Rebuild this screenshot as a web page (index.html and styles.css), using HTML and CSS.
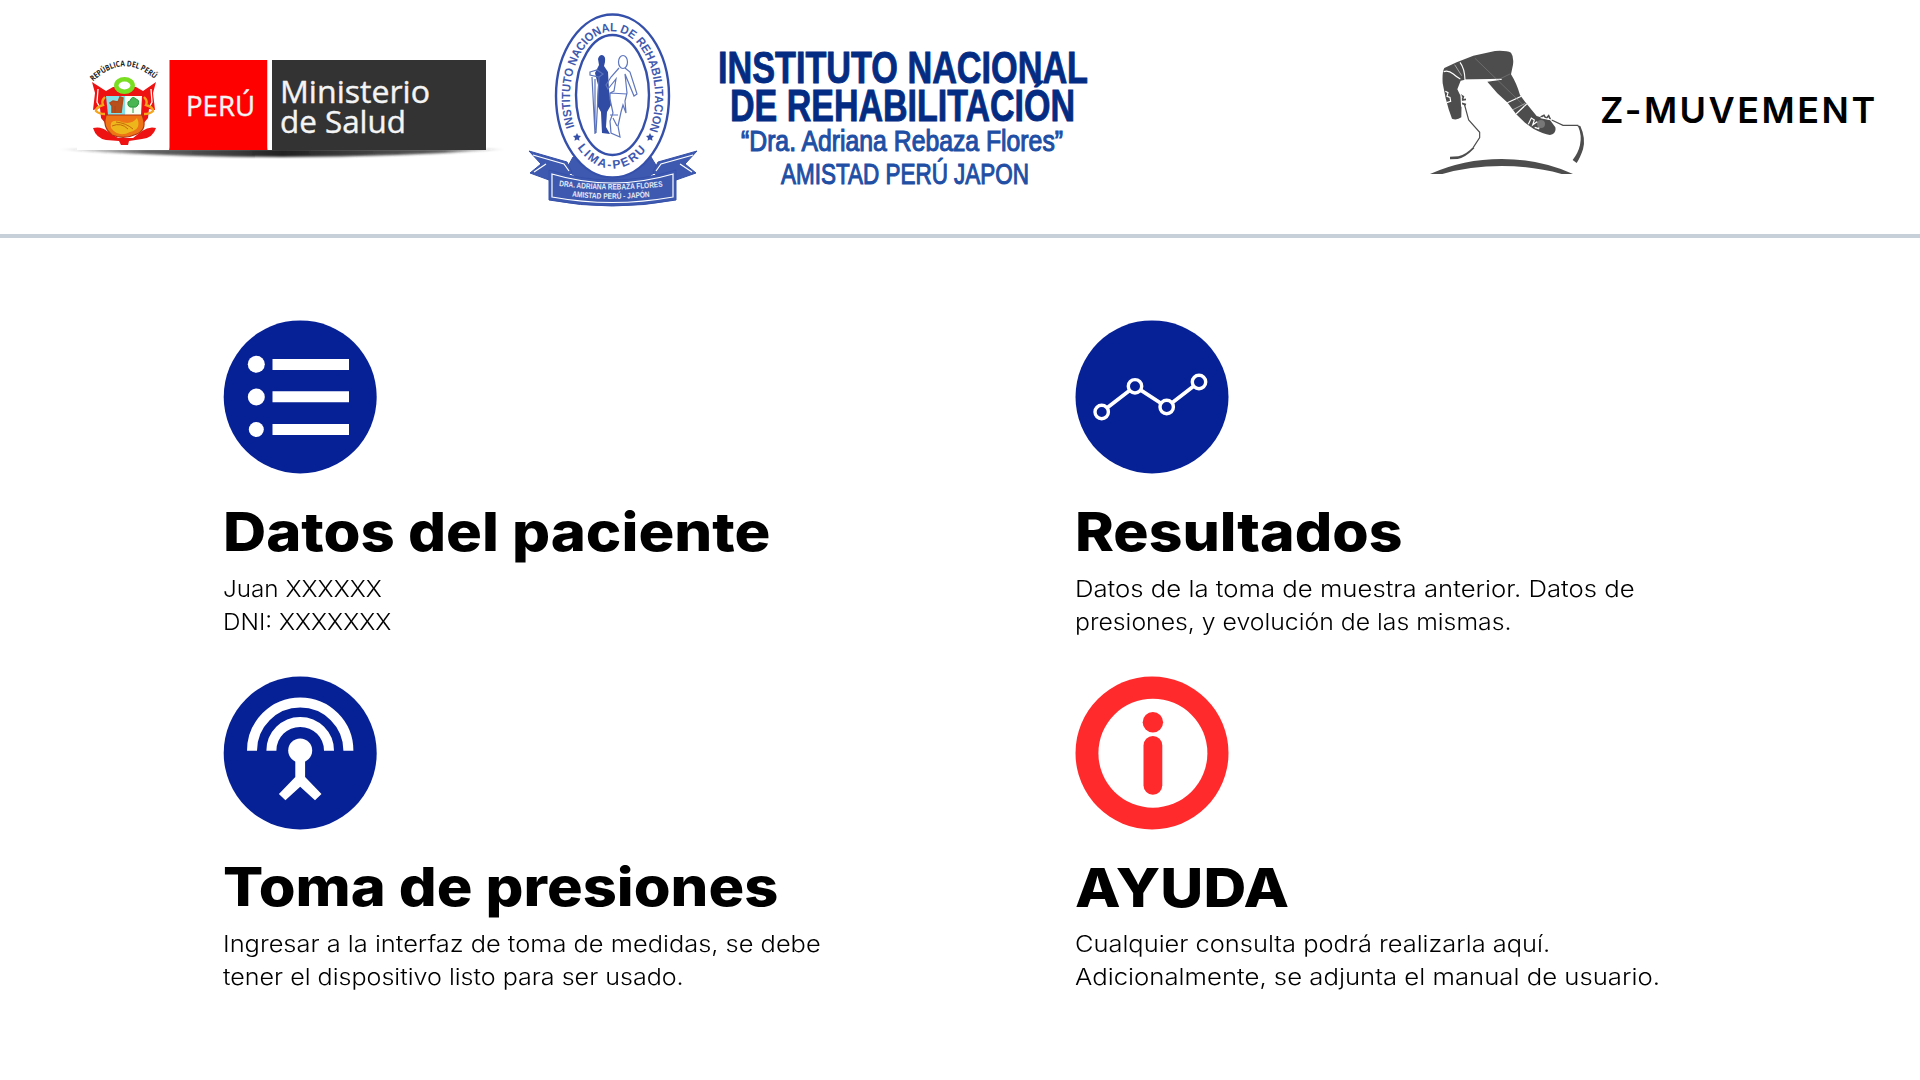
FILE: index.html
```html
<!DOCTYPE html>
<html lang="es">
<head>
<meta charset="utf-8">
<title>Z-MUVEMENT</title>
<link rel="stylesheet" href="styles.css">
</head>
<body>
<header class="header">
  <svg class="logo-minsa" viewBox="50 0 460 233" role="img" aria-label="Ministerio de Salud">
    <defs>
      <linearGradient id="shade" x1="0" x2="1" y1="0" y2="0">
        <stop offset="0" stop-color="#333" stop-opacity="0"/>
        <stop offset=".2" stop-color="#333" stop-opacity=".75"/>
        <stop offset=".5" stop-color="#222"/>
        <stop offset=".85" stop-color="#333" stop-opacity=".8"/>
        <stop offset="1" stop-color="#333" stop-opacity="0"/>
      </linearGradient>
      <filter id="soft" x="-5%" y="-50%" width="110%" height="200%"><feGaussianBlur stdDeviation="1.3"/></filter>
      <path id="crest-arc" d="M93 81.500Q125 51 157 81.500"/>
    </defs>
    <path d="M56 149H508Q400 157 282 157Q160 157 56 149Z" fill="url(#shade)" filter="url(#soft)"/>
    <path d="M77 60H169V150H77Z" fill="#fff"/>
    <path d="M169.500 60H267.500V150H169.500Z" fill="#f00"/>
    <path d="M267.500 60H272V150H267.500Z" fill="#fff"/>
    <path d="M272 60H486V150H272Z" fill="#333"/>
    <text class="crest-text"><textPath href="#crest-arc" textLength="69" lengthAdjust="spacingAndGlyphs">REPÚBLICA DEL PERÚ</textPath></text>
    <g>
      <path d="M92 82L106 91 113 87H136L143 91 156 82 153 93 155 110 149 109 148 118 143 124H106L101 118 100 108 93 110 95 93Z" fill="#ee1212"/>
      <path d="M98 89L97 102 99 106M151 89L152 102 150 106" fill="none" stroke="#fff" stroke-width="1.300"/>
      <path d="M105 97Q101 101 103 105Q96 107 96 111Q99 114 105 114M144 97Q148 101 146 105Q153 107 153 111Q150 114 144 114" fill="none" stroke="#f5a51c" stroke-width="2.400"/>
      <path d="M93 128Q101 126 107 131L118 138H133L142 131Q149 126 156 128Q153 138 142 139L129 141 128 145H121L119 141 106 140Q96 138 93 128Z" fill="#ee1212"/>
      <path d="M106 96H125V115H108Z" fill="#7fe2ea"/>
      <path d="M125 96H142L141 115H125Z" fill="#f7fff2"/>
      <path d="M112 113V106L110 103 113 101 118 102 120 97 123 98 122 105 121 113M115 113V106" fill="#b8501c" stroke="#b04a1c" stroke-width="1.500"/>
      <path d="M133 113V107M128 105Q127 101 130 101Q132 95 136 99Q140 100 138 105Q136 108 133 107Q129 108 128 105Z" fill="#49b553" stroke="#2b9a40" stroke-width="1"/>
      <path d="M106 115H142Q148 129 137 134Q124 140 112 135Q102 127 106 115Z" fill="#ee7416" stroke="#b43412" stroke-width="1.200"/>
      <path d="M111 128Q109 119 119 121Q131 126 137 118Q142 129 130 132Q119 138 111 128Z" fill="#edb61b"/>
      <path d="M112 126Q121 122 128 129M116 122Q126 123 133 129" fill="none" stroke="#c7680f"/>
      <ellipse cx="124.500" cy="85.500" rx="8.200" ry="6.200" fill="#fff" stroke="#79dd20" stroke-width="4.500"/>
    </g>
    <g class="gov-text">
      <text x="186" y="115.500" font-size="27.500" textLength="69" lengthAdjust="spacingAndGlyphs">PERÚ</text>
      <text x="280" y="102.500" font-size="31" textLength="150" lengthAdjust="spacingAndGlyphs">Ministerio</text>
      <text x="280" y="132.500" font-size="31" textLength="126" lengthAdjust="spacingAndGlyphs">de Salud</text>
    </g>
  </svg>

  <svg class="logo-inr" viewBox="520 0 590 233" role="img" aria-label="Instituto Nacional de Rehabilitación">
    <defs>
      <path id="ring-top" d="M574.500 127A42.500 66 0 1 1 650.500 127"/>
      <path id="ring-bottom" d="M573 141A51 75 0 0 0 652 141"/>
      <path id="band-1" d="M559 186Q612 193 667 186"/>
      <path id="band-2" d="M572 196.500Q612 201 654 196.500"/>
    </defs>
    <g fill="#3e5ab0" stroke="#3550aa" stroke-width="1">
      <path d="M566 170L573 157H651L659 170 640 182H584Z"/>
      <path d="M529 151L567 162 572 172 561 182 549 180 530 173 541 164Z"/>
      <path d="M697 151L658 162 653 172 664 182 676 180 696 173 685 164Z"/>
      <path d="M549 170Q612 190 676 170V200Q612 212 549 200Z"/>
    </g>
    <path d="M533 155L564 164 569 171M534 172L546 164M693 155L661 164 656 171M692 172L680 164M552 174Q612 192 673 174V197Q612 208 552 197Z" fill="none" stroke="#fff" stroke-width="1.200"/>
    <ellipse cx="612.500" cy="96" rx="56.500" ry="81.500" fill="#fff" stroke="#3550aa" stroke-width="2.400"/>
    <ellipse cx="612.500" cy="95" rx="36.500" ry="60" fill="#fff" stroke="#3550aa" stroke-width="2.400"/>
    <text class="seal-text" font-size="12"><textPath href="#ring-top" textLength="236" lengthAdjust="spacingAndGlyphs">INSTITUTO NACIONAL DE REHABILITACION</textPath></text>
    <text class="seal-text" font-size="12"><textPath href="#ring-bottom" textLength="82" lengthAdjust="spacing" startOffset="8">LIMA-PERU</textPath></text>
    <path d="M577 133l1.200 2.600 2.800.4-2 2 .5 2.800-2.500-1.300-2.500 1.300.5-2.800-2-2 2.800-.4ZM650 133l1.200 2.600 2.800.4-2 2 .5 2.800-2.500-1.300-2.500 1.300.5-2.800-2-2 2.800-.4Z" fill="#3550aa"/>
    <path d="M602 55Q606 56 605 62L604 66 608 72 609 90 611 105 607 112 606 127 610 134 602 133 601 112 597 105 598 85 595 73 599 65 598 59Q599 55 602 55Z" fill="#2f4ba3"/>
    <path d="M590 72L597 70 603 74 599 77 590 75ZM592 77L595 134M599 77L596 133M595 79V130" fill="none" stroke="#5a72ba" stroke-width="1.200"/>
    <g fill="none" stroke="#5f76bd" stroke-width="1.200">
      <ellipse cx="623" cy="62" rx="4.500" ry="6.500"/>
      <path d="M619 68L611 77 606 85 608 89 616 79 614 91 610 93V99L613 113 610 121 611 133 620 137 618 126 621 112 623 105 626 113 625 101 627 93 625 74 634 96 637 94 630 72 625 68M610 93L627 94M610 115L618 115M613 118L617 126"/>
    </g>
    <text class="band-text"><textPath href="#band-1" textLength="104" lengthAdjust="spacingAndGlyphs">DRA. ADRIANA REBAZA FLORES</textPath></text>
    <text class="band-text"><textPath href="#band-2" textLength="78" lengthAdjust="spacingAndGlyphs">AMISTAD PERÚ - JAPÓN</textPath></text>
    <g class="inr-title">
      <text x="718" y="82.500" textLength="370" lengthAdjust="spacingAndGlyphs">INSTITUTO NACIONAL</text>
      <text x="730" y="120.500" textLength="345" lengthAdjust="spacingAndGlyphs">DE REHABILITACIÓN</text>
    </g>
    <g class="inr-sub">
      <text x="741" y="150.500" textLength="322" lengthAdjust="spacingAndGlyphs">“Dra. Adriana Rebaza Flores”</text>
      <text x="781" y="184.300" textLength="248" lengthAdjust="spacingAndGlyphs">AMISTAD PERÚ JAPON</text>
    </g>
  </svg>

  <div class="brand">
    <svg class="brand-mark" viewBox="0 0 600 480" aria-hidden="true">
      <g fill="#4d4d4d">
        <path d="M60 432Q160 387 275 387Q390 387 489 432H455Q370 408 275 408Q180 408 97 432Z"/>
        <path d="M103 114L140 97 190 77 255 63Q290 61 303 68Q312 80 309 104L303 133Q320 160 330 195L345 215 380 258 392 262 420 270 436 292Q440 310 420 315Q400 312 370 296L345 278 318 252 293 218 262 190 232 155 275 149 165 149 152 152 142 178 155 205 154 262Q140 272 126 266L116 238 107 205 98 160Q96 125 103 114Z"/>
        <path d="M120 380L145 379Q170 372 190 350L193 355Q165 384 143 387L120 388Z"/>
        <path d="M500 286L511 288Q528 325 519 358Q510 385 500 399L488 390Q505 368 510 345Q516 315 505 291Z"/>
      </g>
      <path d="M163 222L176 270 209 307V323L190 352M425 270L459 286H505" fill="none" stroke="#4d4d4d" stroke-width="3.500"/>
      <path d="M152 195L160 200 157 210 168 208M155 220L168 224M392 261L402 256 408 266 416 257 422 270" fill="none" stroke="#4d4d4d" stroke-width="5"/>
      <g fill="none" stroke="#fff" stroke-width="3.500">
        <path d="M101 125Q115 120 130 132Q140 141 151 147M150 97Q164 115 165 150L275 148M292 218L334 199M318 252L350 222M106 184L114 188 111 199 120 202 122 214 110 218M355 283L364 264 373 270 368 285 380 276 390 282 386 296 374 292M153 194L155 230M392 263L425 270"/>
        <path d="M134 104L155 137M307 240L346 220" stroke-width="1.500"/>
      </g>
      <path d="M195 85L345 230M265 149L300 132" fill="none" stroke="#8a8a8a" stroke-width="1.500"/>
      <circle cx="393" cy="282" r="12" fill="#777"/>
    </svg>
    <span class="brand-name">Z-MUVEMENT</span>
  </div>
</header>

<main class="menu">
  <section class="card">
    <svg class="icon" viewBox="223 320 154 154" aria-hidden="true">
      <circle cx="300.200" cy="396.900" r="76.500" fill="#062096"/>
      <g fill="#fff">
        <circle cx="256.300" cy="364.300" r="8.500"/><circle cx="256.300" cy="396.900" r="8.500"/><circle cx="256.300" cy="429.500" r="7.500"/>
        <path d="M272.500 359H349V369.900H272.500ZM272.500 391.300H349V402.300H272.500ZM272.500 424H349V434.900H272.500Z"/>
      </g>
    </svg>
    <h2 class="title title-patient">Datos del paciente</h2>
    <p class="text"><span class="line narrow">Juan XXXXXX</span><span class="line narrow">DNI: XXXXXXX</span></p>
  </section>

  <section class="card">
    <svg class="icon" viewBox="1075 320 154 154" aria-hidden="true">
      <circle cx="1152" cy="396.900" r="76.500" fill="#062096"/>
      <path d="M1101.700 412L1135 386.300 1166.700 407 1199 382" fill="none" stroke="#fff" stroke-width="3.800"/>
      <g fill="#062096" stroke="#fff" stroke-width="3.400">
        <circle cx="1101.700" cy="412" r="6.700"/><circle cx="1135" cy="386.300" r="6.700"/><circle cx="1166.700" cy="407" r="6.700"/><circle cx="1199" cy="382" r="6.700"/>
      </g>
    </svg>
    <h2 class="title title-results">Resultados</h2>
    <p class="text"><span class="line wide">Datos de la toma de muestra anterior. Datos de</span><span class="line snug">presiones, y evolución de las mismas.</span></p>
  </section>

  <section class="card">
    <svg class="icon" viewBox="223 676 154 154" aria-hidden="true">
      <circle cx="300.200" cy="753" r="76.500" fill="#062096"/>
      <path d="M252 750.700A48.200 48.200 0 0 1 348.400 750.700M271.400 750.700A28.800 28.800 0 0 1 329 750.700" fill="none" stroke="#fff" stroke-width="10"/>
      <circle cx="300.200" cy="750.500" r="12" fill="#fff"/>
      <path d="M295.300 758V777L278.900 794 285.400 800.300 300.200 786.700 315 800.300 321.500 794 305.100 777V758Z" fill="#fff"/>
    </svg>
    <h2 class="title title-pressure">Toma de presiones</h2>
    <p class="text"><span class="line medium">Ingresar a la interfaz de toma de medidas, se debe</span><span class="line regular">tener el dispositivo listo para ser usado.</span></p>
  </section>

  <section class="card">
    <svg class="icon" viewBox="1075 676 154 154" aria-hidden="true">
      <circle cx="1152" cy="753" r="76.500" fill="#ff2a2c"/>
      <circle cx="1152.900" cy="753.200" r="54.500" fill="#fff"/>
      <circle cx="1152.900" cy="722.300" r="10.200" fill="#ff2a2c"/>
      <rect x="1143.500" y="736" width="18.800" height="58.700" rx="9.400" fill="#ff2a2c"/>
    </svg>
    <h2 class="title title-help">AYUDA</h2>
    <p class="text"><span class="line medium">Cualquier consulta podrá realizarla aquí.</span><span class="line wide">Adicionalmente, se adjunta el manual de usuario.</span></p>
  </section>
</main>
</body>
</html>
```
FILE: styles.css
```css
* { box-sizing: border-box; }
body {
  margin: 0;
  background: #fff;
  color: #000;
  font-family: Inter, sans-serif;
}
.header {
  display: flex;
  height: 238px;
  padding-left: 50px;
  border-bottom: 4px solid #c7d0d9;
}
.logo-minsa { width: 460px; height: 233px; margin-right: 10px; }
.logo-inr { width: 590px; height: 233px; margin-right: 300px; }
.logo-minsa, .logo-inr, .brand-mark { flex: none; }
.crest-text { font: 700 8px "Open Sans", sans-serif; fill: #222; }
.gov-text { font-family: "Open Sans", sans-serif; fill: #f4f4f4; stroke: #f4f4f4; stroke-width: .4px; }
.seal-text { font-family: "Liberation Sans", sans-serif; font-weight: 700; fill: #3f59ae; }
.band-text { font: 700 8px "Liberation Sans", sans-serif; fill: #e6eaf6; }
.inr-title { font: 700 45px "Liberation Sans", sans-serif; fill: #052c83; stroke: #052c83; stroke-width: .9px; }
.inr-sub { font: 400 29px "Liberation Sans", sans-serif; fill: #1f4fa5; stroke: #1f4fa5; stroke-width: 1.1px; }
.brand { display: flex; padding-top: 30px; }
.brand-mark { width: 200px; height: 160px; margin-right: -10px; }
.brand-name {
  align-self: flex-start;
  margin-top: 58px;
  font-size: 36px;
  font-weight: 600;
  line-height: 44px;
  letter-spacing: 2.5px;
  font-feature-settings: "calt" 0;
  white-space: nowrap;
}
.menu {
  display: grid;
  grid-template-columns: 852px 1fr;
  grid-auto-rows: 356px;
  padding: 82px 0 0 223px;
}
.icon { display: block; width: 154px; height: 154px; }
.title {
  width: max-content;
  margin: 28px 0 0;
  font-size: 54px;
  font-weight: 800;
  line-height: 60px;
  transform-origin: left;
}
.title-patient { transform: scaleX(1.107); }
.title-results { transform: scaleX(1.09); }
.title-pressure { margin-top: 27px; transform: scaleX(1.103); }
.title-help { transform: scaleX(1.097); }
.text {
  margin: 11px 0 0;
  font-size: 23px;
  font-weight: 300;
  line-height: 33px;
  white-space: nowrap;
}
.title-help + .text { margin-top: 10px; }
.line { display: block; width: max-content; transform-origin: left; }
.narrow { transform: scaleX(1.055); }
.snug { transform: scaleX(1.078); }
.regular { transform: scaleX(1.09); }
.medium { transform: scaleX(1.105); }
.wide { transform: scaleX(1.118); }
```
